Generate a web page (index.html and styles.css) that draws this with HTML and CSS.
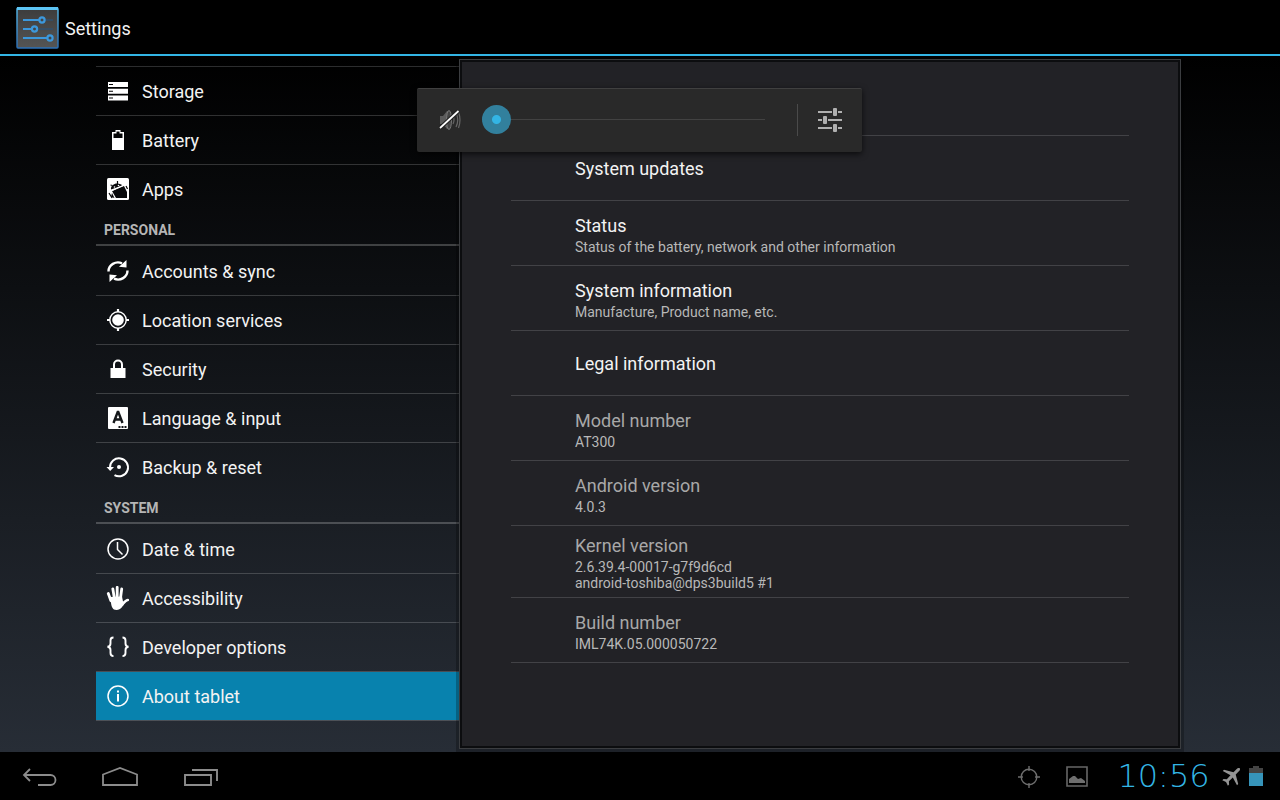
FILE: index.html
```html
<!DOCTYPE html>
<html lang="en">

<head>
    <meta charset="utf-8" />
    <title>Settings</title>
    <link rel="stylesheet" href="styles.css">
</head>

<body>
    <header class="action-bar">
        <svg class="app-icon" viewBox="0 0 44 44">
            <defs>
                <linearGradient id="tile" x1="0" y1="0" x2="0" y2="1">
                    <stop offset="0" stop-color="#3c3c3c" />
                    <stop offset="1" stop-color="#555" />
                </linearGradient>
                <linearGradient id="edge" x1="0" y1="0" x2="0" y2="1">
                    <stop offset="0" stop-color="#55bdf0" />
                    <stop offset="1" stop-color="#2a70b8" />
                </linearGradient>
            </defs>
            <rect x="1" y="2" width="41" height="40" rx="1" fill="url(#tile)" stroke="url(#edge)" stroke-width="1.4" />
            <path d="M1 1h41v3H1z" fill="#5cc4f4" />
            <path d="M7 14h30M7 23h30M7 32h28" stroke="#30506e" stroke-width="1.4" />
            <path d="M7 14h17M7 23h9M7 32h24" stroke="#3c98dc" stroke-width="1.8" />
            <g fill="#444" stroke="#3c98dc" stroke-width="2.2">
                <circle cx="26" cy="14" r="2.600" />
                <circle cx="18.500" cy="23" r="2.600" />
                <circle cx="34" cy="32" r="2.600" />
            </g>
        </svg>
        <h1>Settings</h1>
    </header>

    <main class="content">
        <nav class="sidebar">
            <ul>
                <li><a href="#storage">
                    <svg class="icon" viewBox="0 0 24 24"><path fill="#fff" fill-rule="evenodd" d="M2 3h20v5H2zM3 5v1h4V5zM2 9.700h20v5H2zM3 11.700v1h4v-1zM2 16.400h20v5H2zM3 18.400v1h4v-1z" /></svg>
                    Storage</a></li>
                <li><a href="#battery">
                    <svg class="icon" viewBox="0 0 24 24"><path fill="#fff" fill-rule="evenodd" d="M9.500 2h5v2H18v18H6V4h3.500zM7.500 5.500V10h9V5.500h-3v-2h-3v2z" /></svg>
                    Battery</a></li>
                <li><a href="#apps">
                    <svg class="icon" viewBox="0 0 24 24">
                        <rect x="1" y="1" width="22" height="22" rx="1.500" fill="#fff" />
                        <g fill="#08090b" stroke="#08090b">
                            <path stroke="none" d="M5 12.500C4.500 9 8 6.500 11 6.500s4.500 1 5.500 2zM6 14l12-5 3 6v6H10z" />
                            <path d="M6.500 8.500L4.500 8M11.500 7V4M3 16l3 5M20 9l1.500 3" stroke-width="1.200" fill="none" />
                            <path d="M5 20l3.500 1L6 16z" stroke="none" />
                        </g>
                        <path d="M4 14.500L18 8" stroke="#fff" stroke-width="1.200" />
                        <circle cx="8.500" cy="10" r=".8" fill="#fff" /><circle cx="12.500" cy="8.500" r=".8" fill="#fff" />
                    </svg>
                    Apps</a></li>
            </ul>

            <h2>PERSONAL</h2>
            <ul>
                <li><a href="#accounts">
                    <svg class="icon" viewBox="0 0 24 24">
                        <path d="M2.500 12.500A9.500 9 0 0 1 16 4.300M21.500 11.500A9.500 9 0 0 1 8 19.700" fill="none" stroke="#fff" stroke-width="2.400" />
                        <path d="M20.500 1v7.500L13 7.800zM3.500 23v-7.500l7.500.7z" fill="#fff" />
                    </svg>
                    Accounts &amp; sync</a></li>
                <li><a href="#location">
                    <svg class="icon" viewBox="0 0 24 24">
                        <circle cx="12" cy="12" r="5.800" fill="#fff" />
                        <circle cx="12" cy="12" r="8.200" fill="none" stroke="#fff" stroke-width="1.400" />
                        <path d="M12 1v3M12 20v3M1 12h3M20 12h3" stroke="#fff" stroke-width="2.200" />
                    </svg>
                    Location services</a></li>
                <li><a href="#security">
                    <svg class="icon" viewBox="0 0 24 24">
                        <path d="M4.500 11h15v10h-15z" fill="#fff" />
                        <path d="M8 12V7.500a4 4 0 0 1 8 0V12" fill="none" stroke="#fff" stroke-width="2" />
                    </svg>
                    Security</a></li>
                <li><a href="#language">
                    <svg class="icon" viewBox="0 0 24 24">
                        <rect x="2" y="1" width="20" height="22" rx="1" fill="#fff" />
                        <path d="M7.500 17l4.200-11h.6l4.200 11M9 13.500h6" fill="none" stroke="#14171a" stroke-width="2.400" />
                        <path d="M12.500 20h2v2h-2zM15.500 20h2v2h-2zM18.500 20h2v2h-2z" fill="#14171a" />
                    </svg>
                    Language &amp; input</a></li>
                <li><a href="#backup">
                    <svg class="icon" viewBox="0 0 24 24">
                        <path d="M4 12.500a9 9 0 1 1 4.500 7.600" fill="none" stroke="#fff" stroke-width="2" />
                        <path d="M.5 12h7.500l-3.800 4z" fill="#fff" />
                        <circle cx="13" cy="12" r="2" fill="#fff" />
                    </svg>
                    Backup &amp; reset</a></li>
            </ul>

            <h2>SYSTEM</h2>
            <ul>
                <li><a href="#date">
                    <svg class="icon" viewBox="0 0 24 24" fill="none" stroke="#fff">
                        <circle cx="12" cy="12" r="10" stroke-width="1.500" />
                        <path d="M11.500 5v7.500l5 5" stroke-width="1.500" />
                    </svg>
                    Date &amp; time</a></li>
                <li><a href="#accessibility">
                    <svg class="icon" viewBox="0 0 24 24" fill="none" stroke="#fff" stroke-linecap="round">
                        <path d="M2.300 7.500l2.500 7M6.800 2.800l1.500 9M11.200 1.300v10M15.700 3l-1.200 9" stroke-width="2.800" />
                        <path d="M21.800 14c-2 0-4 3-5.500 4.500" stroke-width="2.600" />
                        <path d="M3.500 11l12.500-.5 1 5 2 .5c-2 4-4 8-8.500 8-4 0-5-3.500-5.500-7z" fill="#fff" stroke="none" />
                    </svg>
                    Accessibility</a></li>
                <li><a href="#developer">
                    <svg class="icon" viewBox="0 0 24 24">
                        <path d="M7.500 2.500C5 2.500 4.500 3.500 4.500 5.500v3c0 2-.7 3-3 3.300 2.300.3 3 1.300 3 3.300v3c0 2 .5 3 3 3M16.500 2.500c2.500 0 3 1 3 3v3c0 2 .7 3 3 3.300-2.300.3-3 1.300-3 3.300v3c0 2-.5 3-3 3" fill="none" stroke="#fff" stroke-width="1.900" />
                    </svg>
                    Developer options</a></li>
                <li class="selected"><a href="#about" aria-current="page">
                    <svg class="icon" viewBox="0 0 24 24">
                        <circle cx="12" cy="12" r="10" fill="none" stroke="#fff" stroke-width="1.500" />
                        <path d="M11 6.500h2v2h-2zM11 10h2v7.500h-2z" fill="#fff" />
                    </svg>
                    About tablet</a></li>
            </ul>
        </nav>

        <section class="panel">
            <ul class="prefs">
                <li><h3>System updates</h3></li>
                <li><h3>Status</h3><p>Status of the battery, network and other information</p></li>
                <li><h3>System information</h3><p>Manufacture, Product name, etc.</p></li>
                <li><h3>Legal information</h3></li>
                <li class="disabled"><h3>Model number</h3><p>AT300</p></li>
                <li class="disabled"><h3>Android version</h3><p>4.0.3</p></li>
                <li class="disabled"><h3>Kernel version</h3><p>2.6.39.4-00017-g7f9d6cd<br>android-toshiba@dps3build5 #1</p></li>
                <li class="disabled"><h3>Build number</h3><p>IML74K.05.000050722</p></li>
            </ul>
        </section>
    </main>

    <div class="volume">
        <svg class="mute" viewBox="0 0 24 24">
            <path d="M2 8h3l4-5h3v18H9l-4-5H2z" fill="#5c5c5c" />
            <ellipse cx="11" cy="12" rx="2.500" ry="9.500" fill="#444" stroke="#777" />
            <path d="M15 8q2 4 0 8M18 5q3.500 7 0 14M20.500 4q3 8 0 16" fill="none" stroke="#666" stroke-width="1.200" />
            <path d="M2 20L20.500 3" stroke="#222" stroke-width="4" />
            <path d="M2 20L20.500 3" stroke="#fff" stroke-width="1.700" />
        </svg>
        <input type="range" min="0" max="15" value="0" aria-label="Volume">
        <button class="more" aria-label="Volume settings">
            <svg viewBox="0 0 26 26" fill="#b0b0b0">
                <path d="M1 4h14v2H1zM21 4h4v2h-4zM1 12h4v2H1zM11 12h14v2H11zM1 20h14v2H1zM21 20h4v2h-4z" />
                <rect x="16" y="1" width="4" height="8" rx="1" /><rect x="6" y="9" width="4" height="8" rx="1" /><rect x="16" y="17" width="4" height="8" rx="1" />
            </svg>
        </button>
    </div>

    <footer class="system-bar">
        <button aria-label="Back">
            <svg viewBox="0 0 36 24"><path d="M8 2L2 8l6 6M2 8h26.500a5 5 0 0 1 0 10H16" fill="none" stroke="#8c8c8c" stroke-width="1.800" /></svg>
        </button>
        <button aria-label="Home">
            <svg viewBox="0 0 36 24"><path d="M1 18V7.500L18 1l17 6.500V18z" fill="none" stroke="#8c8c8c" stroke-width="1.800" /></svg>
        </button>
        <button aria-label="Recent apps">
            <svg viewBox="0 0 36 24"><path d="M3 8h26v10H3zM10 3h25v11" fill="none" stroke="#8c8c8c" stroke-width="1.900" /></svg>
        </button>

        <div class="status">
            <svg class="gps" viewBox="0 0 22 22" fill="none" stroke="#6e6e6e" stroke-width="1.400">
                <circle cx="11" cy="11" r="7.800" /><path d="M11 0v5M11 17v5M0 11h5M17 11h5" />
            </svg>
            <svg class="shot" viewBox="0 0 22 22">
                <path d="M1 1h20v19H1z" fill="none" stroke="#666" stroke-width="1.600" />
                <path d="M3 17v-4l4-3h2l3 3 3-1 4 3v2z" fill="#6e6e6e" />
            </svg>
            <time>10:56</time>
            <svg class="plane" viewBox="0 0 18 18"><path fill="#949494" d="M17.700.3c-.9-.7-2-.2-3 .8L11.500 4.300 2 1.800.8 3l7.700 4.300-3.700 4L1.500 11l-1.200 1.200 3.700 1.900 1.900 3.600L7.100 16.500l-.2-3.300 3.900-3.700 4.200 7.700 1.200-1.200-2.500-9.500 3.200-3.200c1-1 1.500-2.200.8-3z" /></svg>
            <svg class="battery" viewBox="0 0 14 22"><path d="M4 1h6v2h4v5H0V3h4z" fill="#444" /><path d="M0 8h14v13H0z" fill="#3694ba" /></svg>
        </div>
    </footer>
</body>

</html>
```
FILE: styles.css
```css
* {
    box-sizing: border-box;
}

body {
    margin: 0;
    min-height: 100vh;
    display: flex;
    flex-direction: column;
    background: #000;
    color: #f3f3f3;
    font-family: Roboto, "Liberation Sans", sans-serif;
    font-size: 18px;
}

h1, h2, h3, p, ul {
    margin: 0;
    padding: 0;
}

ul {
    list-style: none;
}

button {
    border: 0;
    padding: 0;
    background: none;
}

svg {
    display: block;
    flex: none;
}

.action-bar {
    height: 56px;
    padding: 2px 0 0 16px;
    display: flex;
    align-items: center;
    gap: 5px;
    border-bottom: 2px solid #33b5e5;
}

.app-icon {
    width: 44px;
    height: 44px;
}

.action-bar h1 {
    font-size: 18px;
    font-weight: 400;
}

.content {
    flex: 1;
    display: grid;
    grid-template-columns: 363px 1fr;
    padding: 0 99px 0 96px;
    background: linear-gradient(#000, #272d36);
}

/* left list */
.sidebar {
    padding-top: 10px;
}

.sidebar ul:first-child {
    border-top: 1px solid #2c2d2e;
}

.sidebar li {
    border-bottom: 1px solid rgba(255, 255, 255, 0.18);
}

.sidebar li:last-child:not(.selected) {
    border-bottom: 0;
}

.sidebar a {
    height: 48px;
    padding-left: 10px;
    display: flex;
    align-items: center;
    gap: 12px;
    color: #f3f3f3;
    text-decoration: none;
}

.sidebar .selected {
    background: #0882ae;
    background-clip: padding-box;
}

.icon {
    width: 24px;
    height: 24px;
}

.sidebar h2 {
    height: 33px;
    margin-bottom: 1px;
    padding: 9px 8px 0;
    border-bottom: 2px solid rgba(255, 255, 255, 0.22);
    font-size: 14px;
    line-height: 16px;
    font-weight: 700;
    color: #b5b5b5;
}

/* right pane */
.panel {
    margin: 3px 0;
    padding: 0 51px;
    border: 1px solid #3b3d40;
    background: #222226;
    box-shadow: inset 0 0 0 2px #0c0d0f, 0 0 0 3px rgba(0, 0, 0, 0.25);
}

.prefs {
    margin-top: 75px;
    border-top: 1px solid #424246;
}

.prefs li {
    min-height: 65px;
    padding: 8px 64px 6px;
    display: flex;
    flex-direction: column;
    justify-content: center;
    border-bottom: 1px solid #424246;
}

.prefs h3 {
    font-size: 18px;
    line-height: 24px;
    font-weight: 400;
}

.prefs p {
    margin-top: 1px;
    font-size: 14px;
    line-height: 16px;
    color: #b8b8b8;
}

.prefs .disabled h3 {
    color: #a8a8a8;
}

/* volume popup */
.volume {
    position: absolute;
    top: 88px;
    left: 50%;
    width: 445px;
    height: 64px;
    margin-left: -223px;
    padding: 0 0 2px 21px;
    display: flex;
    align-items: center;
    background: #292929;
    border-top: 1px solid #404040;
    border-radius: 2px;
    box-shadow: 0 2px 6px rgba(0, 0, 0, 0.7);
}

.mute {
    width: 24px;
    height: 24px;
}

.volume input {
    flex: 1;
    height: 30px;
    margin: 0 18px 0 20px;
    appearance: none;
    background: linear-gradient(#424242, #424242) center / calc(100% - 28px) 1px no-repeat;
}

.volume input::-webkit-slider-thumb {
    appearance: none;
    width: 29px;
    height: 29px;
    border-radius: 50%;
    background: radial-gradient(circle, #33b5e5 4px, #32809d 5px);
}

.more {
    height: 32px;
    width: 65px;
    padding-left: 19px;
    border-left: 1px solid #4a4a4a;
}

.more svg {
    width: 26px;
    height: 26px;
}

/* bottom bar */
.system-bar {
    height: 48px;
    padding: 0 17px 0 22px;
    display: flex;
    align-items: center;
    gap: 44px;
}

.system-bar button svg {
    width: 36px;
    height: 24px;
    margin-top: 6px;
}

.status {
    margin-left: auto;
    display: flex;
    align-items: center;
}

.gps,
.shot {
    width: 22px;
    height: 22px;
    margin: 2px 26px 0 0;
}

.status time {
    min-width: 99px;
    text-align: center;
    font-family: "DejaVu Sans", sans-serif;
    font-weight: 200;
    font-size: 32px;
    line-height: 48px;
    color: #33b5e5;
}

.plane {
    width: 18px;
    height: 18px;
    margin: 2px 9px 0;
}

.battery {
    width: 14px;
    height: 22px;
}
```
